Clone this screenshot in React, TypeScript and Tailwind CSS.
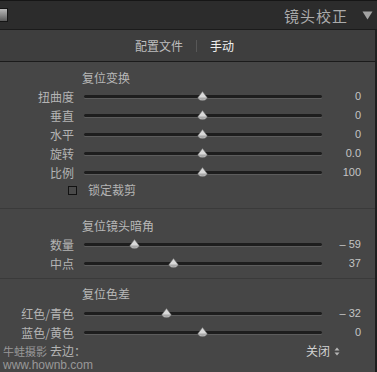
import React from 'react';

const cjk = { fontFamily: '"Noto Sans CJK SC", "Liberation Sans", sans-serif' };
const num = { fontFamily: '"Liberation Sans", "DejaVu Sans", sans-serif' };

type Row = { label: string; value: string; pos: number };

const sections: { title: string; rows: Row[]; crop?: boolean }[] = [
  {
    title: "复位变换",
    rows: [
      { label: "扭曲度", value: "0", pos: 0.496 },
      { label: "垂直", value: "0", pos: 0.496 },
      { label: "水平", value: "0", pos: 0.496 },
      { label: "旋转", value: "0.0", pos: 0.496 },
      { label: "比例", value: "100", pos: 0.496 },
    ],
    crop: true,
  },
  {
    title: "复位镜头暗角",
    rows: [
      { label: "数量", value: "– 59", pos: 0.214 },
      { label: "中点", value: "37", pos: 0.374 },
    ],
  },
  {
    title: "复位色差",
    rows: [
      { label: "红色/青色", value: "– 32", pos: 0.345 },
      { label: "蓝色/黄色", value: "0", pos: 0.496 },
    ],
  },
];

function Thumb() {
  return (
    <svg width="11" height="10" viewBox="0 0 11 10" className="block">
      <path d="M5.5 0.5 L9.8 6.2 Q10.2 9.3 5.5 9.5 Q0.8 9.3 1.2 6.2 Z" fill="#d9d9d9" stroke="#6b6b6b" strokeWidth="0.6" />
      <path d="M1.6 6.6 Q1.8 9 5.5 9.1 Q9.2 9 9.4 6.6 Z" fill="#a8a8a8" />
    </svg>
  );
}

function Slider({ row }: { row: Row }) {
  return (
    <div className="flex items-center h-[19px]">
      <div className="w-[74px] text-right text-[12px] text-[#b4b4b4] leading-none" style={cjk}>
        {row.label}
      </div>
      <div className="relative ml-[10px] w-[238px] h-[19px] flex items-center">
        <div className="w-full h-[3px] rounded-full bg-[#1d1d1d] shadow-[0_1px_0_#5c5c5c]" />
        <div className="absolute top-[4px] -ml-[5.5px]" style={{ left: `${row.pos * 100}%` }}>
          <Thumb />
        </div>
      </div>
      <div className="w-[39px] text-right text-[11px] text-[#c4c4c4] leading-none" style={num}>
        {row.value}
      </div>
    </div>
  );
}

export default function App() {
  return (
    <div className="w-[377px] h-[372px] overflow-hidden bg-[#464646] relative select-none">
      {/* panel header */}
      <div className="h-[29px] border-t border-[#161616] bg-[#2c2c2c] flex items-center pr-[4px]">
        <div className="-ml-[4px] w-[12px] h-[14px] border border-[#151515] bg-gradient-to-b from-[#b8b8b8] via-[#8a8a8a] to-[#5a5a5a]" />
        <div className="flex-1" />
        <div className="text-[15px] tracking-[1px] text-[#ababab] leading-none" style={cjk}>
          镜头校正
        </div>
        <svg width="11" height="9" viewBox="0 0 11 9" className="ml-[14px]">
          <polygon points="0.5,0.5 10.5,0.5 5.5,8.5" fill="#a3a3a3" />
        </svg>
      </div>

      {/* tabs */}
      <div className="h-[33px] border-y border-[#1b1b1b] bg-[#3e3e3e] flex items-center pl-[135px] border-r-2 border-r-[#202020]">
        <span className="text-[12px] text-[#bdbdbd] leading-none" style={cjk}>配置文件</span>
        <span className="mx-[13px] w-px h-[12px] bg-[#575757]" />
        <span className="text-[12px] text-[#eeeeee] leading-none" style={cjk}>手动</span>
      </div>

      {/* content */}
      <div className="border-r-2 border-r-[#1e1e1e] h-[310px]">
        {sections.map((s, i) => (
          <div
            key={s.title}
            className={
              (i === 0 ? "pt-[6px] pb-[10px]" : i === 1 ? "pt-[7px] pb-[5px]" : "pt-[5px]") +
              (i > 0 ? " border-t border-[#3a3a3a]" : "")
            }
          >
            <div className={"flex items-center pl-[82px] " + (i === 2 ? "h-[20px]" : "h-[19px]")}>
              <span className="text-[12px] text-[#b8b8b8] leading-none" style={cjk}>{s.title}</span>
            </div>
            {s.rows.map((r) => (
              <Slider key={r.label} row={r} />
            ))}
            {s.crop && (
              <div className="h-[16px] flex items-center pl-[68px]">
                <div className="w-[9px] h-[9px] border border-[#121212] bg-[#4a4a4a]" />
                <span className="ml-[11px] text-[12px] text-[#b4b4b4] leading-none" style={cjk}>锁定裁剪</span>
              </div>
            )}
          </div>
        ))}

        {/* defringe */}
        <div className="h-[18px] flex items-center">
          <div className="w-[86px] text-right text-[12px] text-[#b4b4b4] leading-none" style={cjk}>
            去边：
          </div>
          <div className="flex-1" />
          <div className="flex items-center mr-[35px]">
            <span className="text-[12px] text-[#d2d2d2] leading-none" style={cjk}>关闭</span>
            <svg width="6" height="9" viewBox="0 0 6 9" className="ml-[4px]">
              <polygon points="3,0.5 5.5,3.5 0.5,3.5" fill="#b5b5b5" />
              <polygon points="0.5,5.5 5.5,5.5 3,8.5" fill="#b5b5b5" />
            </svg>
          </div>
        </div>
      </div>

      {/* watermark */}
      <div className="absolute left-[3px] top-[346px] pointer-events-none">
        <div className="text-[11px] leading-[11px] text-white/45" style={cjk}>牛蛙摄影</div>
        <div className="text-[12px] leading-[12px] text-white/45 mt-[2px]" style={num}>www.hownb.com</div>
      </div>
    </div>
  );
}
